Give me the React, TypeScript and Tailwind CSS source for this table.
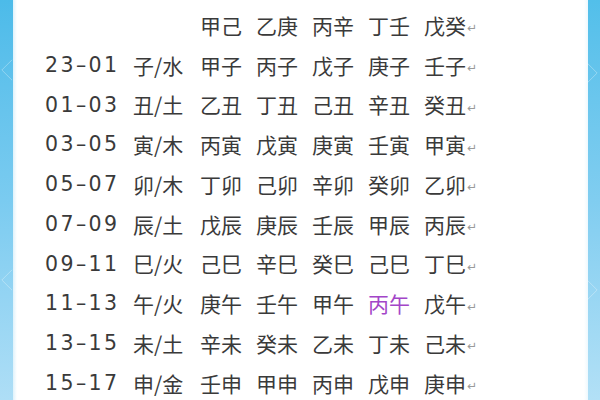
const HEADS = ["甲己", "乙庚", "丙辛", "丁壬", "戊癸"];

const ROWS: { time: string; branch: string; cells: string[] }[] = [
  { time: "23–01", branch: "子/水", cells: ["甲子", "丙子", "戊子", "庚子", "壬子"] },
  { time: "01–03", branch: "丑/土", cells: ["乙丑", "丁丑", "己丑", "辛丑", "癸丑"] },
  { time: "03–05", branch: "寅/木", cells: ["丙寅", "戊寅", "庚寅", "壬寅", "甲寅"] },
  { time: "05–07", branch: "卯/木", cells: ["丁卯", "己卯", "辛卯", "癸卯", "乙卯"] },
  { time: "07–09", branch: "辰/土", cells: ["戊辰", "庚辰", "壬辰", "甲辰", "丙辰"] },
  { time: "09–11", branch: "巳/火", cells: ["己巳", "辛巳", "癸巳", "己巳", "丁巳"] },
  { time: "11–13", branch: "午/火", cells: ["庚午", "壬午", "甲午", "丙午", "戊午"] },
  { time: "13–15", branch: "未/土", cells: ["辛未", "癸未", "乙未", "丁未", "己未"] },
  { time: "15–17", branch: "申/金", cells: ["壬申", "甲申", "丙申", "戊申", "庚申"] },
];

const CJK = "font-['Noto_Sans_CJK_SC',sans-serif]";

function Chevron({ dir, className }: { dir: "l" | "r"; className: string }) {
  return (
    <svg viewBox="0 0 14 24" className={className} fill="none" stroke="white" strokeWidth="1" strokeOpacity="0.35">
      {dir === "l" ? <path d="M13 1 L2 12 L13 23" /> : <path d="M1 1 L12 12 L1 23" />}
    </svg>
  );
}

function Return() {
  return <span className="ml-[1px] translate-y-[3px] text-[12px] leading-none text-[#9a9a9a] font-['DejaVu_Sans',sans-serif]">↵</span>;
}

function Row({ time, branch, cells }: { time: string; branch: string; cells: string[] }) {
  return (
    <div className="flex h-[39.75px] items-center text-[21px] leading-none text-[#3a3a3a]">
      <span className="w-[88px] tracking-[2.4px] font-['DejaVu_Sans',sans-serif] text-[20.5px]">{time}</span>
      <span className={`w-[67px] ${CJK}`}>{branch}</span>
      {cells.map((c, i) => (
        <span
          key={i}
          className={`flex items-center ${i < 4 ? "w-[56px]" : ""} ${CJK} ${c === "丙午" ? "text-[#a345c8]" : ""}`}
        >
          {c}
          {i === 4 ? <Return /> : null}
        </span>
      ))}
    </div>
  );
}

export default function App() {
  return (
    <div className="flex h-[400px] w-[600px] overflow-hidden bg-white">
      <div className="relative w-[13px] bg-gradient-to-b from-[#4cbbe9] via-[#7acbf0] to-[#aedef6]">
        <Chevron dir="l" className="absolute left-[0px] top-[58px] h-[24px] w-[13px]" />
        <Chevron dir="l" className="absolute left-[0px] top-[268px] h-[24px] w-[13px]" />
      </div>
      <div className="w-[4px] bg-gradient-to-r from-[#dff2fb] to-white" />
      <div className="flex-1 pl-[28px] pt-[5.6px]">
        <div className="flex h-[39.75px] items-center text-[21px] leading-none text-[#3a3a3a]">
          <span className="w-[155px]" />
          {HEADS.map((h, i) => (
            <span key={h} className={`flex items-center ${i < 4 ? "w-[56px]" : ""} ${CJK}`}>
              {h}
              {i === 4 ? <Return /> : null}
            </span>
          ))}
        </div>
        {ROWS.map((r) => (
          <Row key={r.time} {...r} />
        ))}
      </div>
      <div className="w-[4px] bg-gradient-to-r from-white to-[#eef8fd]" />
      <div className="relative w-[12px] bg-gradient-to-b from-[#52bfea] via-[#80cdf0] to-[#b2e0f6]">
        <Chevron dir="r" className="absolute left-[-2px] top-[61px] h-[24px] w-[13px]" />
        <Chevron dir="r" className="absolute left-[-2px] top-[278px] h-[24px] w-[13px]" />
      </div>
    </div>
  );
}
